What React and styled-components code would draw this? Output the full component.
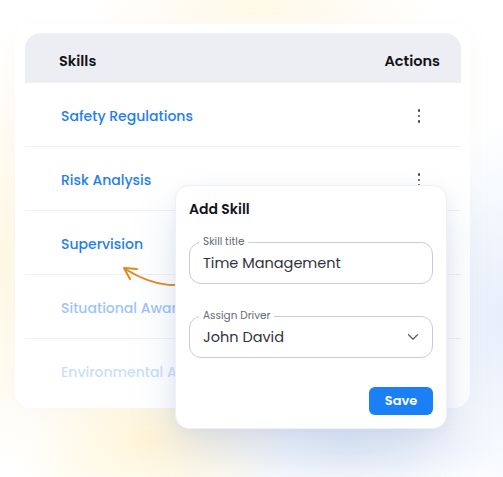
import React from "react";
import styled, { createGlobalStyle } from "styled-components";
import { ChevronDown } from "lucide-react";

const Global = createGlobalStyle`
  html, body { margin: 0; padding: 0; background: #ffffff; }
  body { font-family: "Poppins", Inter, "Noto Sans", sans-serif; }
  * { box-sizing: border-box; }
`;

const Page = styled.div`
  position: relative;
  width: 503px;
  height: 477px;
  overflow: hidden;
  padding: 24px 0 0 15px;
  background:
    radial-gradient(ellipse 170px 50px at 260px 6px, rgba(255, 240, 200, 0.45), rgba(255, 255, 255, 0) 100%),
    radial-gradient(ellipse 140px 90px at 150px 440px, rgba(255, 234, 175, 0.5), rgba(255, 255, 255, 0) 100%),
    radial-gradient(ellipse 50px 220px at 0px 260px, rgba(255, 242, 205, 0.55), rgba(255, 255, 255, 0) 100%),
    radial-gradient(ellipse 90px 200px at 500px 320px, rgba(210, 225, 248, 0.55), rgba(255, 255, 255, 0) 100%),
    radial-gradient(ellipse 150px 60px at 350px 445px, rgba(208, 222, 245, 0.5), rgba(255, 255, 255, 0) 100%),
    #ffffff;
`;

const Card = styled.div`
  width: 455px;
  height: 384px;
  background: #ffffff;
  border-radius: 16px;
  padding: 9px 9px 0 10px;
  box-shadow: 0 6px 24px rgba(180, 170, 140, 0.06);
`;

const HeaderRow = styled.div`
  display: flex;
  align-items: center;
  justify-content: space-between;
  height: 50px;
  background: #eceef3;
  border-radius: 16px 16px 0 0;
  padding: 6px 21px 0 34px;
  font-size: 14.5px;
  font-weight: 600;
  color: #111318;
`;

const Row = styled.div`
  display: flex;
  align-items: center;
  justify-content: space-between;
  height: 64px;
  padding: 3px 41px 0 36px;
  border-bottom: 1px solid ${(p) => (p.$last ? "transparent" : "#eef0f3")};
`;

const SkillName = styled.span`
  font-size: 14px;
  font-weight: 500;
  color: #1f7ef0;
  opacity: ${(p) => p.$fade};
`;

const Kebab = styled.span`
  display: flex;
  flex-direction: column;
  gap: 3px;
  span {
    width: 2.4px;
    height: 2.4px;
    border-radius: 50%;
    background: #40444c;
  }
`;

const Modal = styled.div`
  position: absolute;
  left: 175px;
  top: 185px;
  width: 272px;
  height: 244px;
  background: #ffffff;
  border: 1px solid #eef0f4;
  border-radius: 14px;
  padding: 13px 13px 0 13px;
  display: flex;
  flex-direction: column;
  box-shadow: 0 24px 44px rgba(120, 150, 205, 0.24), 0 4px 14px rgba(120, 130, 160, 0.08);
`;

const Title = styled.div`
  font-size: 14px;
  font-weight: 600;
  color: #121419;
  line-height: 20px;
  margin-bottom: 23px;
`;

const Field = styled.div`
  position: relative;
  height: 42px;
  border: 1px solid #c9ccd4;
  border-radius: 12px;
  display: flex;
  align-items: center;
  justify-content: space-between;
  padding: 0 10px 0 13px;
  margin-bottom: ${(p) => p.$mb}px;
`;

const Label = styled.span`
  position: absolute;
  top: -8px;
  left: 9px;
  padding: 0 4px;
  background: #ffffff;
  font-size: 10.5px;
  line-height: 14px;
  color: #676b73;
`;

const Value = styled.span`
  font-size: 14.5px;
  color: #30333a;
`;

const Actions = styled.div`
  display: flex;
  justify-content: flex-end;
`;

const SaveButton = styled.button`
  width: 64px;
  height: 28px;
  border: none;
  border-radius: 6px;
  background: #1b7ff5;
  color: #ffffff;
  font-family: inherit;
  font-size: 13px;
  font-weight: 600;
`;

const Arrow = styled.svg`
  position: absolute;
  left: 115px;
  top: 260px;
  overflow: visible;
`;

const skills = [
  { name: "Safety Regulations", fade: 1 },
  { name: "Risk Analysis", fade: 1 },
  { name: "Supervision", fade: 1 },
  { name: "Situational Awareness", fade: 0.45 },
  { name: "Environmental Awareness", fade: 0.25 },
];

export default function App() {
  return (
    <>
      <Global />
      <Page>
        <Card>
          <HeaderRow>
            <span>Skills</span>
            <span>Actions</span>
          </HeaderRow>
          {skills.map((s, i) => (
            <Row key={s.name} $last={i === skills.length - 1}>
              <SkillName $fade={s.fade}>{s.name}</SkillName>
              {i < 2 && (
                <Kebab>
                  <span />
                  <span />
                  <span />
                </Kebab>
              )}
            </Row>
          ))}
        </Card>
        <Arrow width="80" height="32" viewBox="0 0 80 32">
          <path
            d="M78 19 C 68 27, 45 30, 10 9"
            fill="none"
            stroke="#e8841c"
            strokeWidth="2"
            strokeLinecap="round"
          />
          <path
            d="M22 9 L 9 8 L 15 19"
            fill="none"
            stroke="#e8841c"
            strokeWidth="2"
            strokeLinecap="round"
            strokeLinejoin="round"
          />
        </Arrow>
        <Modal>
          <Title>Add Skill</Title>
          <Field $mb={32}>
            <Label>Skill title</Label>
            <Value>Time Management</Value>
          </Field>
          <Field $mb={29}>
            <Label>Assign Driver</Label>
            <Value>John David</Value>
            <ChevronDown size={18} color="#5a5e66" strokeWidth={1.6} />
          </Field>
          <Actions>
            <SaveButton>Save</SaveButton>
          </Actions>
        </Modal>
      </Page>
    </>
  );
}
